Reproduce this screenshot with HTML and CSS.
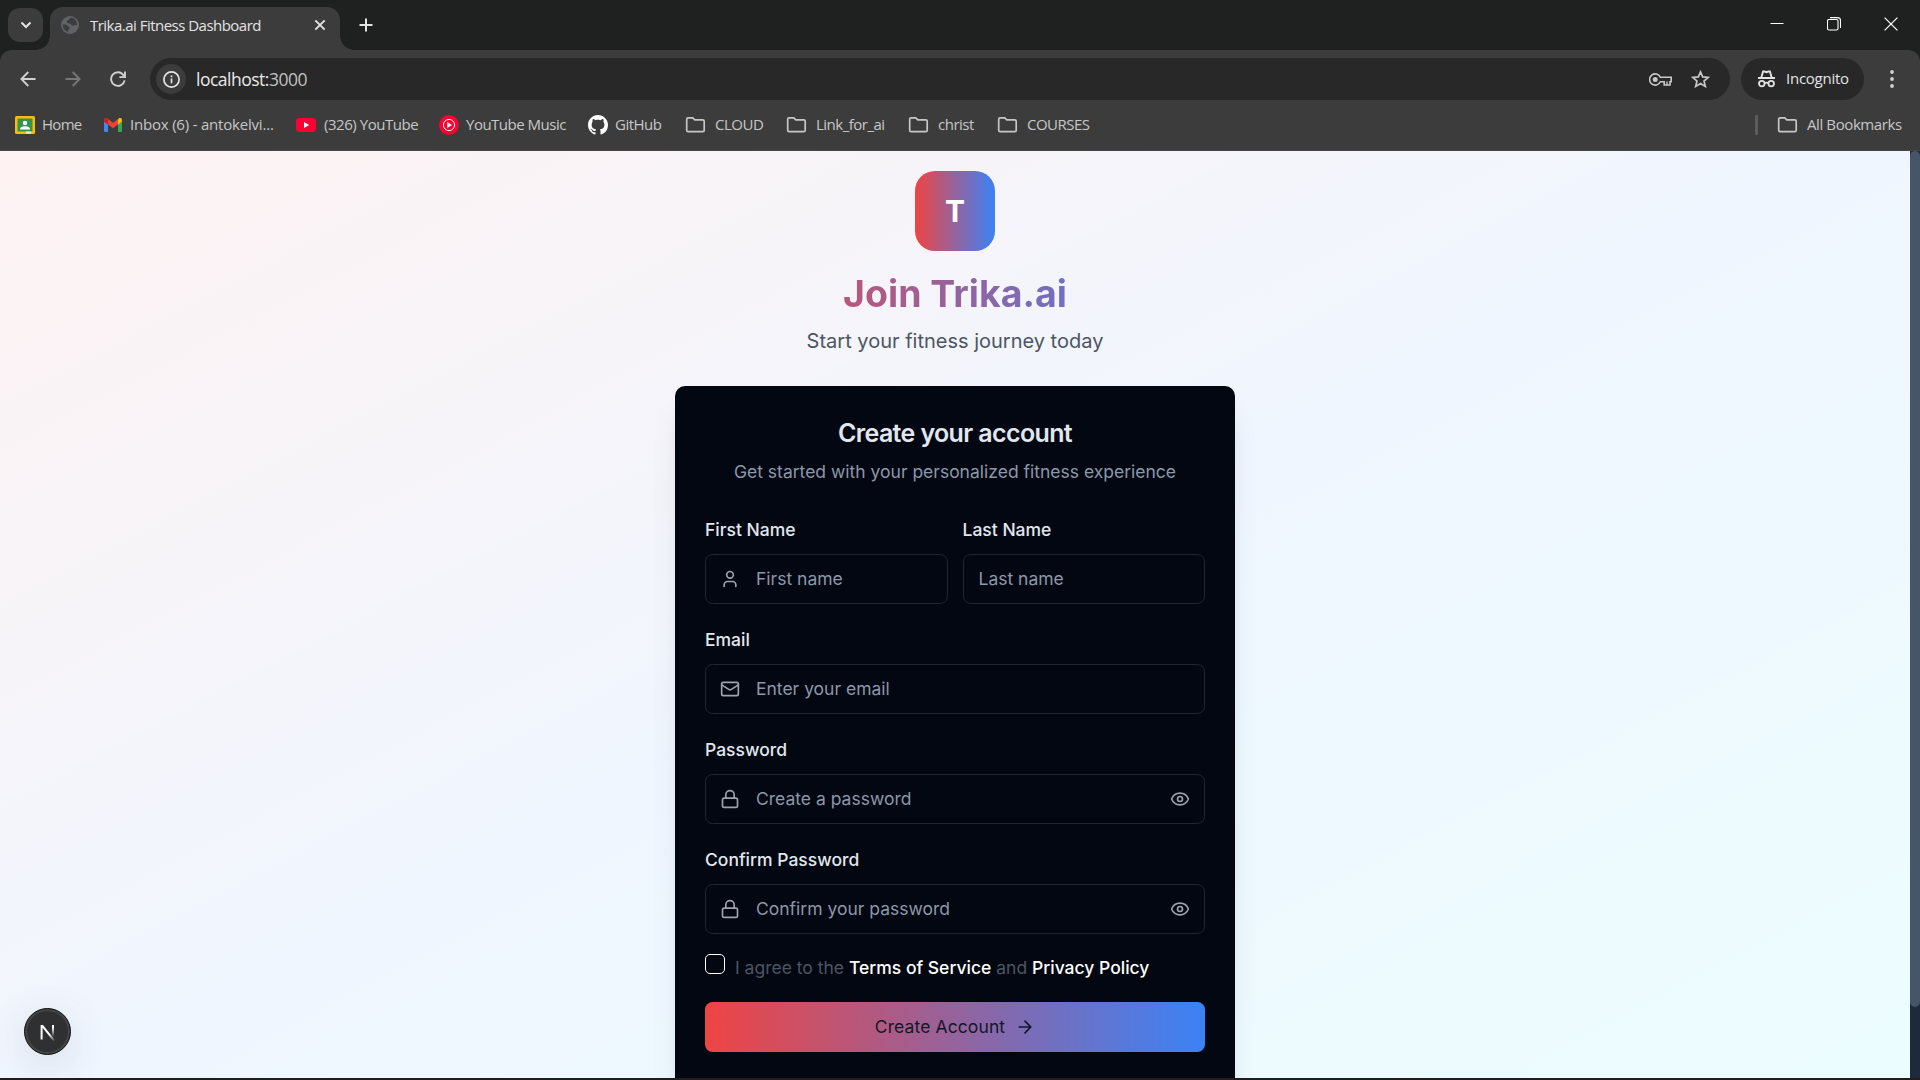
FILE: index.html
```html
<!DOCTYPE html>
<html lang="en">
<head>
<meta charset="utf-8">
<title>Trika.ai Fitness Dashboard</title>
<link rel="stylesheet" href="styles.css">
</head>
<body>
<svg class="sprite" aria-hidden="true">
  <symbol id="folder" viewBox="0 0 20 20"><path d="M1.2 4.2c0-.9.5-1.4 1.4-1.4h4.7l2 2h8c.9 0 1.4.5 1.4 1.4v9c0 .9-.5 1.4-1.4 1.4H2.6c-.9 0-1.4-.5-1.4-1.4z" fill="none" stroke="currentColor" stroke-width="1.7"/></symbol>
  <symbol id="lock" viewBox="0 0 24 24"><rect x="3" y="11" width="18" height="11" rx="2"/><path d="M7 11V7a5 5 0 0 1 10 0v4"/></symbol>
  <symbol id="eye" viewBox="0 0 24 24"><path d="M2.06 12.35a1 1 0 0 1 0-.7 10.75 10.75 0 0 1 19.88 0 1 1 0 0 1 0 .7 10.75 10.75 0 0 1-19.88 0"/><circle cx="12" cy="12" r="3"/></symbol>
</svg>

<header class="browser">
  <div class="tabstrip">
    <button class="tab-search"><svg width="12" height="8" viewBox="0 0 12 8"><path d="M1.5 1.5 6 6l4.500-4.500" fill="none" stroke="#e3e3e3" stroke-width="2"/></svg></button>
    <div class="tab">
      <svg class="favicon" width="18" height="18" viewBox="0 0 18 18"><circle cx="9" cy="9" r="9" fill="#5f6368"/><path d="M10 1.800c-2 .5-1.500 2-2.800 2.400S5.500 6 6.500 6.900s3.500.2 3.700 1.600 1.600 1.500 2.800.8 2.600.2 3.200-.6C15.800 4.500 13.500 2 10 1.800zM1.800 8.500c1.500 0 3.500-.2 4.500 1.200s2.700.6 2.500 2.200-2 1.200-1.600 4C4 15 1.700 12.500 1.800 8.500z" fill="#3c3c3c"/></svg>
      <span class="tab-title">Trika.ai Fitness Dashboard</span>
      <svg class="tab-close" width="12" height="12" viewBox="0 0 12 12"><path d="m1.300 1.300 9.400 9.400m0-9.400-9.400 9.400" stroke="#e3e3e3" stroke-width="1.900"/></svg>
    </div>
    <svg class="new-tab" width="14" height="14" viewBox="0 0 14 14"><path d="M7 .5v13M.5 7h13" stroke="#e3e3e3" stroke-width="2"/></svg>
    <div class="window-controls">
      <svg width="14" height="14" viewBox="0 0 14 14"><path d="M.5 6.500h13" stroke="#fff"/></svg>
      <svg width="14" height="14" viewBox="0 0 14 14"><rect x=".5" y="2.500" width="10.500" height="10.500" rx="1.500" fill="none" stroke="#fff" stroke-width="1.100"/><path d="M3 .6h7.500a3 3 0 0 1 3 3V11" fill="none" stroke="#fff" stroke-width="1.100"/></svg>
      <svg width="14" height="14" viewBox="0 0 14 14"><path d="m.6.6 12.800 12.800m0-12.800L.6 13.400" stroke="#fff" stroke-width="1.200"/></svg>
    </div>
  </div>
  <div class="toolbar">
    <svg class="nav-icon" width="16" height="16" viewBox="0 0 16 16"><path d="M15.500 8H1.500M8.300 1 1.400 8l6.900 7" fill="none" stroke="#d0d0d0" stroke-width="1.900"/></svg>
    <svg class="nav-icon" width="16" height="16" viewBox="0 0 16 16"><path d="M.5 8h14M7.700 1l6.900 7-6.900 7" fill="none" stroke="#777" stroke-width="1.900"/></svg>
    <svg class="nav-icon" width="16" height="16" viewBox="0 0 16 16"><path d="M14.600 9.300A6.800 6.800 0 1 1 13.500 4.200l1.300 1.500M15 .5v5.600H9.400" fill="none" stroke="#d0d0d0" stroke-width="1.900"/></svg>
    <div class="address">
      <span class="site-info"><svg width="17" height="17" viewBox="0 0 17 17"><circle cx="8.500" cy="8.500" r="7.600" fill="none" stroke="#e3e3e3" stroke-width="1.700"/><path d="M8.500 7.600v4.600M8.500 4.500v1.800" stroke="#e3e3e3" stroke-width="1.700"/></svg></span>
      <span class="url">localhost:<span class="port">3000</span></span>
      <svg class="key" width="23" height="13" viewBox="0 0 23 13"><path d="M11.300 4.300A5.600 5.600 0 1 0 11.300 8.700H15.200V12H21V8.700h1.200V4.300z" fill="none" stroke="#c7c7c7" stroke-width="1.600"/><circle cx="6.200" cy="6.500" r="2.500" fill="#c7c7c7"/><path d="M18 8.500V12" stroke="#c7c7c7" stroke-width="1.400"/></svg>
      <svg class="star" width="19" height="18" viewBox="0 0 19 18"><path d="m9.500 1.900 2.200 5 5.500.5-4.200 3.600 1.300 5.400-4.800-2.900-4.800 2.900L6 11 1.800 7.400l5.500-.5z" fill="none" stroke="#c7c7c7" stroke-width="1.700"/></svg>
    </div>
    <div class="incognito">
      <svg width="19" height="18" viewBox="0 0 19 18"><path d="M1 8h17M4.300 7.500 6.100 1.500h1.500l1.900.7 1.900-.7h1.500l1.800 6" fill="none" stroke="#e3e3e3" stroke-width="1.900"/><g fill="none" stroke="#e3e3e3" stroke-width="1.800"><circle cx="4.800" cy="13.600" r="2.800"/><circle cx="14.200" cy="13.600" r="2.800"/><path d="M7.600 13.200q1.900-1 3.800 0"/></g></svg>
      <span>Incognito</span>
    </div>
    <svg class="menu" width="4" height="18" viewBox="0 0 4 18"><g fill="#d0d0d0"><circle cx="2" cy="2" r="1.900"/><circle cx="2" cy="9" r="1.900"/><circle cx="2" cy="16" r="1.900"/></g></svg>
  </div>
  <nav class="bookmarks">
    <a><svg width="20" height="18" viewBox="0 0 20 18"><rect width="20" height="18" rx="1.500" fill="#fbbc04"/><rect x="2.500" y="2.500" width="15" height="13" fill="#34934f"/><circle cx="10" cy="7" r="2.200" fill="#fff"/><path d="M5 13.500q0-3.200 5-3.200t5 3.200z" fill="#fff"/><path d="M11 15.500h5v2h-5z" fill="#e9eaea"/></svg><span class="bk-home">Home</span></a>
    <a><svg width="18" height="14" viewBox="0 0 18 14"><path d="M0 3v9.800Q0 14 1.200 14H4V5.500z" fill="#4285f4"/><path d="M18 3v9.800q0 1.200-1.200 1.200H14V5.500z" fill="#34a853"/><path d="M14 1.500V6.500l4-3V2C18 0 16 -.6 14.600.5z" fill="#fbbc04"/><path d="M0 3.500V2C0 0 2-.6 3.400.5L9 4.700 14 1v5.500l-5 3.700-5-3.700z" fill="#ea4335"/><path d="M0 3.500V2Q.2.100 2 0l2 1v5.500z" fill="#c5221f"/></svg><span class="bk-inbox">Inbox (6) - antokelvi...</span></a>
    <a><svg width="20" height="14" viewBox="0 0 20 14"><rect width="20" height="14" rx="3.500" fill="#ff0033"/><path d="m8 4 5.200 3L8 10z" fill="#fff"/></svg><span class="bk-yt">(326) YouTube</span></a>
    <a><svg width="20" height="20" viewBox="0 0 20 20"><circle cx="10" cy="10" r="10" fill="#ff0033"/><circle cx="10" cy="10" r="5.600" fill="none" stroke="#fff" stroke-width="1"/><path d="m8.200 7 4.800 3-4.800 3z" fill="#fff"/></svg><span class="bk-ytm">YouTube Music</span></a>
    <a><svg width="20" height="20" viewBox="0 0 16 16"><path fill="#fff" d="M8 0C3.580 0 0 3.580 0 8c0 3.540 2.290 6.530 5.470 7.590.4.070.55-.17.55-.38 0-.19-.01-.82-.01-1.490-2.010.37-2.530-.49-2.690-.94-.09-.23-.48-.94-.82-1.130-.28-.15-.68-.52-.01-.53.63-.01 1.080.58 1.230.82.72 1.210 1.870.87 2.330.66.07-.52.28-.87.51-1.070-1.780-.2-3.640-.89-3.640-3.950 0-.87.31-1.590.82-2.150-.08-.2-.36-1.020.08-2.120 0 0 .67-.21 2.200.82.640-.18 1.320-.27 2-.27s1.360.09 2 .27c1.530-1.040 2.200-.82 2.200-.82.44 1.100.16 1.920.08 2.120.51.56.82 1.270.82 2.150 0 3.070-1.870 3.750-3.650 3.950.29.25.54.73.54 1.480 0 1.070-.01 1.930-.01 2.200 0 .21.15.46.55.38A8.010 8.010 0 0 0 16 8c0-4.420-3.580-8-8-8"/></svg><span class="bk-gh">GitHub</span></a>
    <a class="folder"><svg width="21" height="20"><use href="#folder"/></svg><span class="bk-cloud">CLOUD</span></a>
    <a class="folder"><svg width="21" height="20"><use href="#folder"/></svg><span class="bk-link">Link_for_ai</span></a>
    <a class="folder"><svg width="21" height="20"><use href="#folder"/></svg><span class="bk-christ">christ</span></a>
    <a class="folder"><svg width="21" height="20"><use href="#folder"/></svg><span class="bk-courses">COURSES</span></a>
    <i class="separator"></i>
    <a class="folder"><svg width="21" height="20"><use href="#folder"/></svg><span class="bk-all">All Bookmarks</span></a>
  </nav>
</header>

<div class="viewport">
  <main class="page">
    <div class="logo">T</div>
    <h1>Join Trika.ai</h1>
    <p class="tagline">Start your fitness journey today</p>
    <form class="card">
      <h2>Create your account</h2>
      <p class="description">Get started with your personalized fitness experience</p>
      <div class="fields">
        <div class="name-row">
          <div class="field">
            <label>First Name</label>
            <div class="control"><svg class="icon" viewBox="0 0 24 24"><circle cx="12" cy="7" r="4"/><path d="M19 21v-2a4 4 0 0 0-4-4H9a4 4 0 0 0-4 4v2"/></svg><input type="text" placeholder="First name"></div>
          </div>
          <div class="field">
            <label>Last Name</label>
            <div class="control plain"><input type="text" placeholder="Last name"></div>
          </div>
        </div>
        <div class="field">
          <label>Email</label>
          <div class="control"><svg class="icon" viewBox="0 0 24 24"><rect x="2" y="4" width="20" height="16" rx="2"/><path d="m22 7-8.970 5.700a1.940 1.940 0 0 1-2.060 0L2 7"/></svg><input type="email" placeholder="Enter your email"></div>
        </div>
        <div class="field">
          <label>Password</label>
          <div class="control"><svg class="icon"><use href="#lock"/></svg><input type="password" placeholder="Create a password"><svg class="icon"><use href="#eye"/></svg></div>
        </div>
        <div class="field">
          <label>Confirm Password</label>
          <div class="control"><svg class="icon"><use href="#lock"/></svg><input type="password" placeholder="Confirm your password"><svg class="icon"><use href="#eye"/></svg></div>
        </div>
      </div>
      <div class="agree"><span class="checkbox"></span><p>I agree to the <a>Terms of Service</a> and <a>Privacy Policy</a></p></div>
      <button type="button" class="submit"><span>Create Account</span><svg class="icon" viewBox="0 0 24 24"><path d="M5 12h14M12 5l7 7-7 7"/></svg></button>
    </form>
  </main>
  <div class="scrollbar"><div class="thumb"></div></div>
</div>
<div class="bottom-edge"></div>

<div class="dev-badge">
  <svg width="18" height="20" viewBox="0 0 18 20"><defs><linearGradient id="stem" x1="0" y1="0" x2="0" y2="1"><stop offset="0.2" stop-color="#fff"/><stop offset="1" stop-color="#fff" stop-opacity="0"/></linearGradient><linearGradient id="diag" gradientUnits="userSpaceOnUse" x1="11" y1="12" x2="16" y2="19"><stop offset="0" stop-color="#fff"/><stop offset="1" stop-color="#fff" stop-opacity="0"/></linearGradient></defs><path d="M1.600 3h2.400l12.700 16h-2.500L3.600 5.700V17.500h-2z" fill="url(#diag)"/><rect x="13" y="3" width="2" height="12" fill="url(#stem)"/></svg>
</div>
</body>
</html>
```
FILE: styles.css
```css
* { box-sizing: border-box; }
body { margin: 0; width: 1920px; height: 1080px; overflow: hidden; display: flex; flex-direction: column; background: #1f1f1f; font-family: Inter, sans-serif; }
svg { display: block; flex: none; }
.sprite { position: absolute; width: 0; height: 0; }
h1, h2, p { margin: 0; }
button { border: 0; padding: 0; font: inherit; }

/* Browser chrome */
.browser { height: 151px; flex: none; background: #1f2120; color: #c7c7c7; font: 15px/20px "Open Sans", "Noto Sans", sans-serif; white-space: nowrap; }
.tabstrip { height: 50px; display: flex; align-items: center; padding-left: 8px; }
.tab-search { width: 35px; height: 34px; border-radius: 12px; background: #3c3c3c; display: grid; place-items: center; }
.tab { position: relative; width: 290px; height: 43px; margin: 7px 0 0 7px; padding: 0 14px 7px 11px; border-radius: 13px 13px 0 0; background: #3c3c3c; display: flex; align-items: center; color: #e3e3e3; }
.tab::before, .tab::after { content: ""; position: absolute; bottom: 0; width: 14px; height: 14px; }
.tab::before { left: -14px; background: radial-gradient(circle at 0 0, transparent 13.500px, #3c3c3c 14px); }
.tab::after { right: -14px; background: radial-gradient(circle at 100% 0, transparent 13.500px, #3c3c3c 14px); }
.tab-title { margin-left: 11px; flex: 1; font-size: 15px; letter-spacing: -.52px; }
.new-tab { margin-left: 19px; }
.window-controls { margin: 0 22px 2px auto; display: flex; gap: 43px; }
.toolbar { height: 58px; border-radius: 12px 12px 0 0; background: #3c3c3c; display: flex; align-items: center; padding-left: 20px; }
.nav-icon { margin-right: 29px; }
.address { width: 1580px; height: 42px; margin-left: -5px; border-radius: 21px; background: #282828; display: flex; align-items: center; padding: 0 20px 0 6px; }
.site-info { width: 30px; height: 30px; border-radius: 50%; background: #3c3c3c; display: grid; place-items: center; }
.url { flex: 1; margin-left: 10px; font-size: 17.500px; letter-spacing: -.5px; color: #e8e8e8; }
.port { color: #c0c0c0; }
.key { margin-right: 19px; }
.incognito { width: 123px; height: 42px; margin-left: 11px; border-radius: 21px; background: #282828; display: flex; align-items: center; gap: 10px; padding-left: 16px; color: #e3e3e3; letter-spacing: -.25px; }
.incognito span { margin-bottom: 2px; }
.menu { margin-left: 26px; }
.bookmarks { height: 43px; padding: 0 0 10px 15px; background: #3c3c3c; border-bottom: 1px solid #474747; display: grid; grid-template-columns: 89px 192px 143px 149px 97px 101px 122px 89px 1fr 22px 143px; grid-template-rows: 34px; align-items: center; letter-spacing: -.5px; }
.bookmarks a { display: flex; align-items: center; gap: 7px; }
.bookmarks span { margin-bottom: 2px; }
.bookmarks .bk-inbox { margin-left: 1px; letter-spacing: -.2px; }
.bookmarks .bk-yt { margin-left: 1px; letter-spacing: -.45px; }
.bookmarks .bk-home { letter-spacing: -.7px; }
.bookmarks .bk-all { letter-spacing: -.4px; }
.bookmarks .folder { gap: 9px; }
.separator { width: 3px; height: 20px; border-radius: 1px; background: #5c5c5c; }

/* Page */
.viewport { height: 927px; flex: none; display: flex; overflow: hidden; }
.page { width: 1910px; height: 1004px; flex: none; padding-top: 20px; background: linear-gradient(to bottom right, #fef2f2, #eff6ff 50%, #ecfeff); display: flex; flex-direction: column; align-items: center; }
.logo { width: 80px; height: 80px; flex: none; border-radius: 20px; background: linear-gradient(to right, #ef4444, #3b82f6); color: #fff; font-size: 30px; font-weight: 700; line-height: 80px; text-align: center; }
h1 { width: 560px; margin-top: 20px; font-size: 37.500px; line-height: 45px; font-weight: 700; text-align: center; color: transparent; background: linear-gradient(to right, #ef4444, #3b82f6); -webkit-background-clip: text; background-clip: text; }
.tagline { margin-top: 10px; font-size: 20px; line-height: 30px; color: #4b5563; }
.card { width: 560px; margin-top: 30px; padding: 30px 30px 60px; flex: none; border-radius: 10px; background: #030711; box-shadow: 0 25px 31px -6px rgba(0, 0, 0, .1), 0 10px 12px -7px rgba(0, 0, 0, .1); font-size: 17.500px; color: #e1e7ef; display: flex; flex-direction: column; }
h2 { font-size: 25px; line-height: 35px; font-weight: 600; letter-spacing: -.625px; text-align: center; }
.description { margin-top: 8px; line-height: 25px; text-align: center; color: #8b98aa; }
.fields { margin-top: 30px; display: flex; flex-direction: column; gap: 20px; }
.name-row { display: grid; grid-template-columns: 1fr 1fr; gap: 15px; }
.field { display: flex; flex-direction: column; gap: 10px; min-width: 0; }
label { height: 30px; line-height: 31px; font-weight: 500; }
.control { height: 50px; border: 1px solid #20252f; border-radius: 7.500px; padding: 0 14px; display: flex; align-items: center; gap: 16px; }
.plain { padding-left: 15px; }
.icon { width: 20px; height: 20px; fill: none; stroke: #9ca3af; stroke-width: 2; stroke-linecap: round; stroke-linejoin: round; }
input { flex: 1; min-width: 0; border: 0; outline: 0; padding: 0 1px 2px 0; background: none; font: inherit; color: inherit; }
input::placeholder { color: #8b98aa; opacity: 1; }
.agree { height: 48px; margin-top: 20px; display: flex; gap: 10px; color: #4b5563; }
.checkbox { width: 20px; height: 20px; border: 1px solid #fff; border-radius: 5px; }
.agree p { line-height: 28px; }
.agree a { color: #fff; font-weight: 500; }
.submit { height: 50px; border-radius: 7.500px; background: linear-gradient(to right, #ef4444, #3b82f6); color: #111827; display: flex; align-items: center; justify-content: center; gap: 10px; }
.submit span { margin-bottom: 2px; letter-spacing: .1px; }
.submit .icon { stroke: #111827; }
.scrollbar { width: 10px; background: #1e293b; }
.thumb { height: 856px; border-radius: 5px; background: #475569; }
.bottom-edge { height: 2px; background: #201e1d; }

/* Floating badge */
.dev-badge { position: absolute; left: 24px; top: 1008px; width: 47px; height: 47px; border: 1px solid #111; border-radius: 50%; background: #2f3031; box-shadow: inset 0 0 0 2px #454545, 0 10px 40px rgba(60, 60, 100, .14); display: grid; place-items: center; }
```
